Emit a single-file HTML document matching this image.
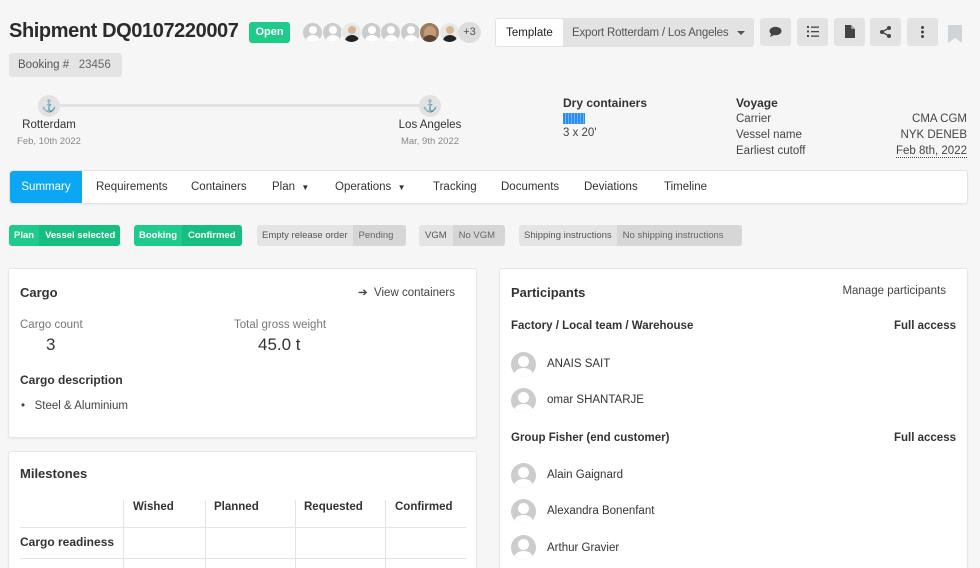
<!DOCTYPE html>
<html><head><meta charset="utf-8"><style>
*{box-sizing:border-box;margin:0;padding:0}
html,body{width:980px;height:568px;overflow:hidden}
body{background:#f6f6f6;font-family:"Liberation Sans",sans-serif;color:#333;position:relative;font-size:12px}
.a{position:absolute;white-space:nowrap}
.av{position:absolute;top:22px;width:21px;height:21px;border-radius:50%;background:#ccc;overflow:hidden;border:1px solid #f6f6f6}
.av::before{content:"";position:absolute;left:6px;top:3px;width:8px;height:8px;border-radius:50%;background:#fff}
.av::after{content:"";position:absolute;left:3px;top:12px;width:14px;height:12px;border-radius:50% 50% 0 0;background:#fff}
.ph{background:#e8e8e8}.ph::before{background:#d9b596}.ph::after{background:#222}
.ph2{background:#9a7a5e}.ph2::before{background:#c59a78;width:12px;height:14px;left:4px}.ph2::after{background:#5b4230}
.ib{position:absolute;top:18px;width:31px;height:28px;background:#e3e3e3;border-radius:3px}
.card{position:absolute;background:#fff;border:1px solid #e6e6e6;border-radius:3px;box-shadow:0 1px 2px rgba(0,0,0,.06)}
.pill{position:absolute;top:225px;height:21px;border-radius:3px;font-size:9.5px;line-height:21px;display:flex;overflow:hidden;font-weight:bold;white-space:nowrap}
.pill span{padding:0 6px}
.g{background:#1ecb8b;color:#fff}.g span:last-child{background:#16bf80}
.gr{background:#e4e4e4;color:#555;font-weight:normal}.gr span:last-child{background:#d6d6d6;color:#666}
.tab{position:absolute;top:181px;font-size:11.5px;color:#333;white-space:nowrap}
.pav{position:absolute;left:511px;width:25px;height:25px;border-radius:50%;background:#ccc;overflow:hidden}
.pav::before{content:"";position:absolute;left:7px;top:4px;width:11px;height:11px;border-radius:50%;background:#fff}
.pav::after{content:"";position:absolute;left:3px;top:16px;width:19px;height:14px;border-radius:50% 50% 0 0;background:#fff}
.pn{position:absolute;left:547px;font-size:11.5px;color:#333}
.th{position:absolute;top:501px;font-size:11.5px;font-weight:bold;color:#333}
.r{text-align:right}
</style></head><body>
<div class="a" style="left:9px;top:20px;font-size:20px;font-weight:bold;color:#2b2b2b;letter-spacing:-0.4px">Shipment DQ0107220007</div>
<div class="a" style="left:249px;top:22px;width:41px;height:21px;background:#1ecb8b;color:#fff;border-radius:3px;font-size:11px;font-weight:bold;text-align:center;line-height:21px">Open</div>
<div class="av" style="left:302px"></div>
<div class="av" style="left:322px"></div>
<div class="av ph" style="left:341px"></div>
<div class="av" style="left:361px"></div>
<div class="av" style="left:380px"></div>
<div class="av" style="left:400px"></div>
<div class="av ph2" style="left:419px"></div>
<div class="av ph" style="left:439px"></div>
<div class="a" style="left:458px;top:22px;width:23px;height:21px;border-radius:50%;background:#ddd;font-size:11px;color:#555;text-align:center;line-height:21px">+3</div>
<div class="a" style="left:9px;top:53px;width:113px;height:24px;background:#e4e4e4;border-radius:3px;font-size:11.5px;line-height:24px;color:#555;padding-left:9px">Booking #&nbsp;&nbsp;&nbsp;<span style="color:#666">23456</span></div>

<div class="a" style="left:495px;top:18px;width:259px;height:29px;border:1px solid #e2e2e2;border-radius:3px;background:#e3e3e3;overflow:hidden">
<div class="a" style="left:0;top:0;width:67px;height:27px;background:#fff;font-size:11.5px;line-height:28px;text-align:center;color:#222">Template</div>
<div class="a" style="left:76px;top:0;line-height:28px;font-size:11.5px;color:#555;letter-spacing:-0.2px">Export Rotterdam / Los Angeles</div>
<div class="a" style="left:241px;top:12px;border:4px solid transparent;border-top:4px solid #555;border-bottom:0"></div>
</div>
<div class="ib" style="left:760px"><svg class="a" style="left:9px;top:8px" width="13" height="12" viewBox="0 0 13 12"><ellipse cx="6.5" cy="5" rx="6" ry="4.3" fill="#444"/><path d="M2 8 L1 11 L5 9z" fill="#444"/></svg></div>
<div class="ib" style="left:797px"><svg class="a" style="left:10px;top:8px" width="12" height="11" viewBox="0 0 12 11"><g fill="#444"><rect x="0" y="0" width="2" height="2"/><rect x="4" y="0.5" width="8" height="1.3"/><rect x="0" y="4.5" width="2" height="2"/><rect x="4" y="5" width="8" height="1.3"/><rect x="0" y="9" width="2" height="2"/><rect x="4" y="9.5" width="8" height="1.3"/></g></svg></div>
<div class="ib" style="left:834px"><svg class="a" style="left:11px;top:7px" width="10" height="13" viewBox="0 0 10 13"><path d="M0 0H6L10 4V13H0Z" fill="#444"/><path d="M6 0V4H10" fill="#999"/></svg></div>
<div class="ib" style="left:870px"><svg class="a" style="left:10px;top:8px" width="11" height="12" viewBox="0 0 11 12"><g fill="#444"><circle cx="9" cy="2" r="2"/><circle cx="2" cy="6" r="2"/><circle cx="9" cy="10" r="2"/></g><path d="M9 2L2 6L9 10" stroke="#444" stroke-width="1.3" fill="none"/></svg></div>
<div class="ib" style="left:907px"><svg class="a" style="left:14px;top:8px" width="3" height="12"><g fill="#444"><circle cx="1.5" cy="1.5" r="1.5"/><circle cx="1.5" cy="6" r="1.5"/><circle cx="1.5" cy="10.5" r="1.5"/></g></svg></div>
<svg class="a" style="left:948px;top:25px" width="14" height="18"><path d="M0 0H14V18L7 13L0 18Z" fill="#cfd4da"/></svg>

<div class="a" style="left:49px;top:104px;width:381px;height:3px;background:#e2e2e2"></div>
<div class="a" style="left:38px;top:95px;width:22px;height:22px;border-radius:50%;background:#e2e2e2;text-align:center;line-height:22px;font-size:12px;color:#555">⚓</div>
<div class="a" style="left:419px;top:95px;width:22px;height:22px;border-radius:50%;background:#e2e2e2;text-align:center;line-height:22px;font-size:12px;color:#555">⚓</div>
<div class="a" style="left:0;top:119px;width:98px;text-align:center;font-size:11.5px;color:#333">Rotterdam</div>
<div class="a" style="left:0;top:136px;width:98px;text-align:center;font-size:9.5px;color:#888">Feb, 10th 2022</div>
<div class="a" style="left:380px;top:119px;width:100px;text-align:center;font-size:11.5px;color:#333">Los Angeles</div>
<div class="a" style="left:380px;top:136px;width:100px;text-align:center;font-size:9.5px;color:#888">Mar, 9th 2022</div>

<div class="a" style="left:563px;top:96px;font-size:12px;font-weight:bold;color:#333">Dry containers</div>
<div class="a" style="left:563px;top:113px;width:22px;height:11px;background:repeating-linear-gradient(90deg,#2a8cf0 0 2px,#6bb4ff 2px 3px)"></div>
<div class="a" style="left:563px;top:127px;font-size:11.5px;color:#444">3 x 20'</div>
<div class="a" style="left:736px;top:96px;font-size:12px;font-weight:bold;color:#333">Voyage</div>
<div class="a" style="left:736px;top:111px;font-size:11.5px;color:#444;line-height:16px">Carrier<br>Vessel name<br>Earliest cutoff</div>
<div class="a r" style="left:860px;top:111px;width:107px;font-size:11.5px;color:#444;line-height:16px">CMA CGM<br>NYK DENEB<br><span style="border-bottom:1px dotted #444">Feb 8th, 2022</span></div>

<div class="a" style="left:9px;top:170px;width:959px;height:34px;background:#fff;border:1px solid #e4e4e4;border-radius:3px;box-shadow:0 1px 2px rgba(0,0,0,.05)"></div>
<div class="a" style="left:10px;top:171px;width:72px;height:32px;background:#0ba7f4;border-radius:3px 0 0 3px;color:#fff;font-size:11.5px;text-align:center;line-height:32px">Summary</div>
<div class="tab" style="left:96px">Requirements</div>
<div class="tab" style="left:191px">Containers</div>
<div class="tab" style="left:272px">Plan&nbsp;&nbsp;<span style="font-size:8px">▼</span></div>
<div class="tab" style="left:335px">Operations&nbsp;&nbsp;<span style="font-size:8px">▼</span></div>
<div class="tab" style="left:433px">Tracking</div>
<div class="tab" style="left:501px">Documents</div>
<div class="tab" style="left:584px">Deviations</div>
<div class="tab" style="left:664px">Timeline</div>

<div class="pill g" style="left:9px;width:111px"><span style="padding:0 5px">Plan</span><span style="flex:1">Vessel selected</span></div>
<div class="pill g" style="left:134px;width:108px"><span style="padding:0 5px">Booking</span><span style="flex:1">Confirmed</span></div>
<div class="pill gr" style="left:257px;width:149px"><span style="padding:0 5px">Empty release order</span><span style="flex:1">Pending</span></div>
<div class="pill gr" style="left:419px;width:86px"><span>VGM</span><span style="flex:1">No VGM</span></div>
<div class="pill gr" style="left:519px;width:223px"><span style="padding:0 5px">Shipping instructions</span><span style="flex:1">No shipping instructions</span></div>

<div class="card" style="left:8px;top:268px;width:469px;height:170px"></div>
<div class="a" style="left:20px;top:285px;font-size:13px;font-weight:bold;color:#333">Cargo</div>
<div class="a r" style="left:300px;top:285px;width:155px;font-size:11.5px;color:#444">➔&nbsp; View containers</div>
<div class="a" style="left:20px;top:319px;font-size:11.5px;color:#777">Cargo count</div>
<div class="a" style="left:46px;top:335px;font-size:17px;color:#333">3</div>
<div class="a" style="left:234px;top:319px;font-size:11.5px;color:#777">Total gross weight</div>
<div class="a" style="left:258px;top:335px;font-size:17px;color:#333">45.0 t</div>
<div class="a" style="left:20px;top:373px;font-size:12px;font-weight:bold;color:#333">Cargo description</div>
<div class="a" style="left:21px;top:400px;font-size:11.5px;color:#444">•&nbsp;&nbsp; Steel &amp; Aluminium</div>

<div class="card" style="left:8px;top:451px;width:469px;height:125px"></div>
<div class="a" style="left:20px;top:466px;font-size:13px;font-weight:bold;color:#333">Milestones</div>
<div class="th" style="left:133px">Wished</div>
<div class="th" style="left:214px">Planned</div>
<div class="th" style="left:304px">Requested</div>
<div class="th" style="left:395px">Confirmed</div>
<div class="a" style="left:123px;top:500px;width:1px;height:68px;background:#e4e4e4"></div>
<div class="a" style="left:205px;top:500px;width:1px;height:68px;background:#e4e4e4"></div>
<div class="a" style="left:295px;top:500px;width:1px;height:68px;background:#e4e4e4"></div>
<div class="a" style="left:385px;top:500px;width:1px;height:68px;background:#e4e4e4"></div>
<div class="a" style="left:20px;top:527px;width:446px;height:1px;background:#e4e4e4"></div>
<div class="a" style="left:20px;top:558px;width:446px;height:1px;background:#e4e4e4"></div>
<div class="a" style="left:20px;top:535px;font-size:12px;font-weight:bold;color:#333">Cargo readiness</div>

<div class="card" style="left:499px;top:268px;width:469px;height:310px"></div>
<div class="a" style="left:511px;top:285px;font-size:13px;font-weight:bold;color:#333">Participants</div>
<div class="a r" style="left:780px;top:285px;width:166px;font-size:11.5px;color:#444">Manage participants</div>
<div class="a" style="left:511px;top:320px;font-size:11.5px;font-weight:bold;color:#333">Factory / Local team / Warehouse</div>
<div class="a r" style="left:856px;top:320px;width:100px;font-size:11.5px;font-weight:bold;color:#333">Full access</div>
<div class="pav" style="top:352px"></div><div class="pn" style="top:358px">ANAIS SAIT</div>
<div class="pav" style="top:388px"></div><div class="pn" style="top:394px">omar SHANTARJE</div>
<div class="a" style="left:511px;top:432px;font-size:11.5px;font-weight:bold;color:#333">Group Fisher (end customer)</div>
<div class="a r" style="left:856px;top:432px;width:100px;font-size:11.5px;font-weight:bold;color:#333">Full access</div>
<div class="pav" style="top:463px"></div><div class="pn" style="top:469px">Alain Gaignard</div>
<div class="pav" style="top:499px"></div><div class="pn" style="top:505px">Alexandra Bonenfant</div>
<div class="pav" style="top:535px"></div><div class="pn" style="top:542px">Arthur Gravier</div>
</body></html>
